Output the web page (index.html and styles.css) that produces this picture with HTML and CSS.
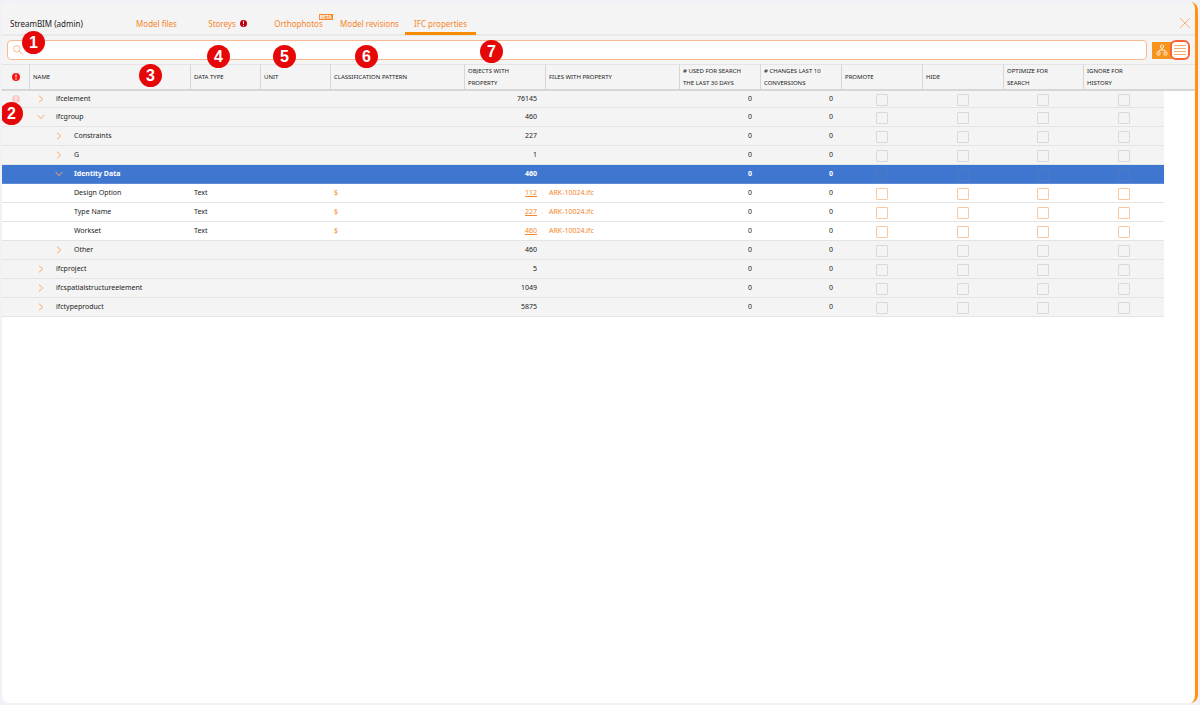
FILE: index.html
```html
<!DOCTYPE html>
<html lang="en">

<head>
    <meta charset="UTF-8">
    <meta name="viewport" content="width=device-width, initial-scale=1.0">
    <title>StreamBIM - IFC properties</title>
    <link rel="stylesheet" href="styles.css">
</head>

<body>

    <svg class="sprite" aria-hidden="true">
        <symbol id="alert" viewBox="0 0 8 8">
            <circle cx="4" cy="4" r="4" fill="currentColor" />
            <path d="M4 1.3v3.2M4 5.6v1.1" stroke="#fff" stroke-width="1.1" />
        </symbol>
        <symbol id="chevron" viewBox="0 0 8 8">
            <path d="M2 0.7L5.7 4L2 7.3" fill="none" stroke="currentColor" />
        </symbol>
    </svg>

    <div class="panel">
        <header class="topbar">
            <h1>StreamBIM (admin)</h1>
            <nav class="tabs">
                <a href="#">Model files</a>
                <a href="#">Storeys <svg class="alert dark"><use href="#alert" /></svg></a>
                <a href="#"><span class="with-beta">Orthophotos<sup class="beta">BETA</sup></span></a>
                <a href="#">Model revisions</a>
                <a href="#" class="active">IFC properties</a>
            </nav>
            <button class="close" aria-label="Close">
                <svg viewBox="0 0 12 12"><path d="M1 1L11 11M11 1L1 11" /></svg>
            </button>
        </header>

        <div class="toolbar">
            <label class="search">
                <svg viewBox="0 0 10 10"><circle cx="3.8" cy="3.8" r="3.2" /><path d="M6.1 6.1L9.7 9.7" /></svg>
                <input type="text" aria-label="Search properties">
            </label>
            <div class="view-toggle">
                <button class="tree" aria-label="Tree view">
                    <svg viewBox="0 0 12 12">
                        <rect x="4.5" y="1" width="3" height="3" rx="1" />
                        <rect x="1" y="8" width="3" height="3" rx="1" />
                        <rect x="8" y="8" width="3" height="3" rx="1" />
                        <path d="M6 4v2M2.5 8L3.5 6h5L9.5 8" />
                    </svg>
                </button>
                <button class="list" aria-label="List view">
                    <svg viewBox="0 0 12 12"><path d="M0 1.5h12M0 4.5h12M0 7.5h12M0 10.5h12" /></svg>
                </button>
            </div>
        </div>

        <table class="props">
            <colgroup>
                <col class="c-icon">
                <col class="c-name">
                <col class="c-small">
                <col class="c-small">
                <col class="c-wide">
                <col class="c-mid">
                <col class="c-wide">
                <col class="c-mid">
                <col class="c-mid">
                <col class="c-mid">
                <col class="c-mid">
                <col class="c-end">
                <col class="c-mid">
                <col>
            </colgroup>
            <thead>
                <tr>
                    <th class="icon"><svg class="alert"><use href="#alert" /></svg></th>
                    <th>NAME</th>
                    <th>DATA TYPE</th>
                    <th>UNIT</th>
                    <th>CLASSIFICATION PATTERN</th>
                    <th>OBJECTS WITH<br>PROPERTY</th>
                    <th>FILES WITH PROPERTY</th>
                    <th># USED FOR SEARCH<br>THE LAST 30 DAYS</th>
                    <th># CHANGES LAST 10<br>CONVERSIONS</th>
                    <th>PROMOTE</th>
                    <th>HIDE</th>
                    <th>OPTIMIZE FOR<br>SEARCH</th>
                    <th>IGNORE FOR<br>HISTORY</th>
                    <td></td>
                </tr>
            </thead>
            <tbody id="rows"></tbody>
        </table>

        <span class="marker m1">1</span>
        <span class="marker m2">2</span>
        <span class="marker m3">3</span>
        <span class="marker m4">4</span>
        <span class="marker m5">5</span>
        <span class="marker m6">6</span>
        <span class="marker m7">7</span>
    </div>

    <script src="script.js"></script>
</body>

</html>
```
FILE: styles.css
```css
* {
    box-sizing: border-box;
}

body {
    margin: 0;
    padding: 2px;
    min-height: 100vh;
    display: flex;
    background-color: #f2f1f7;
    color: #222;
    font-family: "Noto Sans", sans-serif;
    font-size: 7px;
}

button {
    padding: 0;
    border: none;
    background: none;
    cursor: pointer;
}

a {
    color: #f5862a;
}

svg {
    display: block;
    fill: none;
}

.sprite {
    position: absolute;
    width: 0;
    height: 0;
}

.panel {
    position: relative;
    flex: 1;
    min-width: 0;
    background-color: #fff;
    border-right: 3px solid #ff9210;
    border-radius: 8px;
    overflow: hidden;
}

/* top bar */
.topbar {
    display: flex;
    height: 34px;
    padding-left: 8px;
    background-color: #f4f4f4;
    border-bottom: 2px solid #e9e9e9;
}

.topbar h1 {
    width: 111px;
    margin: 0;
    padding-top: 9px;
    font-size: 8px;
    font-weight: normal;
    line-height: 26px;
}

.tabs {
    display: flex;
    height: 33px;
    font-size: 8px;
}

.tabs a {
    display: flex;
    align-items: center;
    justify-content: center;
    gap: 4px;
    width: 71px;
    padding-top: 12px;
    border-bottom: 3px solid transparent;
    text-decoration: none;
    white-space: nowrap;
}

.tabs .active {
    border-color: #f78c00;
}

.alert {
    width: 8px;
    height: 8px;
    color: #fa1414;
}

.alert.dark {
    width: 7px;
    height: 7px;
    color: #b8000c;
}

.alert.faded {
    color: #fbc9c9;
}

.with-beta {
    position: relative;
}

.beta {
    position: absolute;
    right: -10px;
    top: -4px;
    padding: 0 1px;
    background-color: #f5872a;
    color: #fff;
    font-size: 5px;
    font-weight: bold;
    line-height: 6px;
}

.close {
    margin-left: auto;
    padding: 10px 4px 0 0;
}

.close svg {
    width: 12px;
    height: 12px;
    stroke: #f9b27c;
}

/* search and view buttons */
.toolbar {
    display: flex;
    align-items: center;
    gap: 5px;
    height: 28px;
    padding: 0 5px;
    background-color: #f4f4f4;
}

.search {
    display: flex;
    flex: 1;
    align-items: center;
    gap: 4px;
    height: 20px;
    padding: 0 5px;
    background-color: #fff;
    border: 1px solid #f8b892;
    border-radius: 4px;
}

.search svg {
    width: 10px;
    height: 10px;
    stroke: #f9b98a;
}

.search input {
    flex: 1;
    border: none;
    outline: none;
    font-size: 9px;
}

.view-toggle {
    display: flex;
    align-items: center;
}

.view-toggle button {
    display: flex;
    align-items: center;
    justify-content: center;
}

.view-toggle svg {
    width: 12px;
    height: 12px;
    stroke: #f9ae70;
}

.view-toggle .tree {
    width: 20px;
    height: 17px;
    margin-right: -2px;
    background-color: #f7941d;
}

.view-toggle .tree svg {
    stroke: #fff0dc;
}

.view-toggle .list {
    width: 20px;
    height: 20px;
    background-color: #fff;
    border: 2px solid #fa6438;
    border-radius: 6px;
}

/* property table */
.props {
    width: 100%;
    table-layout: fixed;
    border-collapse: separate;
    border-spacing: 0;
}

.c-icon { width: 27px; }
.c-name { width: 161px; }
.c-small { width: 70px; }
.c-wide { width: 134px; }
.c-mid { width: 81px; }
.c-end { width: 80px; }

.props th,
.props td {
    padding: 0 4px;
    text-align: left;
    white-space: nowrap;
}

.props thead th,
.props thead td {
    height: 27px;
    padding: 0 3px;
    background-color: #f4f4f4;
    border-top: 1px solid #e4e4e4;
    border-bottom: 2px solid #d6d6d6;
    font-size: 6px;
    font-weight: normal;
    line-height: 12px;
}

.props thead th + th {
    border-left: 1px solid #d6d6d6;
}

.props .icon {
    padding: 0;
}

.props .icon svg {
    margin: 0 auto;
}

.props tbody td {
    height: 19px;
    line-height: 16px;
    border-bottom: 1px solid #e4e4e4;
}

.props tbody tr:first-child td {
    height: 17px;
    line-height: 14px;
}

.props .group td {
    background-color: #f4f4f4;
}

.props .selected td {
    background-color: #3f76cf;
    border-color: #5d8bd6;
    color: #fff;
    font-weight: bold;
}

.props tbody td.rest {
    background-color: #fff;
    border-color: #fff;
}

.props td.num {
    padding-right: 8px;
    text-align: right;
}

.props .files a {
    text-decoration: none;
}

.props .pattern {
    color: #f5862a;
}

.name {
    display: flex;
    align-items: center;
    padding-left: 4px;
}

.name.deep {
    padding-left: 22px;
}

.name button,
.name .space {
    width: 19px;
    color: #f9a765;
}

.name button svg {
    width: 8px;
    height: 8px;
}

.name button.open svg {
    transform: rotate(90deg);
}

.props td.check {
    padding: 0;
}

.check input {
    appearance: none;
    display: block;
    width: 12px;
    height: 12px;
    margin: 1px auto 0;
    border: 1px solid #fac7a0;
    border-radius: 1px;
}

.group .check input {
    border-color: #d9d9d9;
}

.selected .check input {
    border-color: #5079bf;
}

/* numbered markers over the page */
.marker {
    position: absolute;
    width: 23px;
    height: 23px;
    border-radius: 50%;
    background-color: #e60808;
    color: #fff;
    font-family: "Liberation Sans", Arial, sans-serif;
    font-size: 16px;
    font-weight: bold;
    line-height: 23px;
    text-align: center;
}

.m1 { left: 20px; top: 29px; }
.m2 { left: -2px; top: 100px; }
.m3 { left: 137px; top: 62px; }
.m4 { left: 205px; top: 43px; }
.m5 { left: 271px; top: 43px; }
.m6 { left: 353px; top: 43px; }
.m7 { left: 478px; top: 38px; }
```
FILE: script.js
```javascript
const rows = [
    { name: 'ifcelement', level: 1, count: 76145, alert: true },
    { name: 'ifcgroup', level: 1, count: 460, open: true },
    { name: 'Constraints', level: 2, count: 227 },
    { name: 'G', level: 2, count: 1 },
    { name: 'Identity Data', level: 2, count: 460, open: true, selected: true },
    { name: 'Design Option', level: 3, count: 112 },
    { name: 'Type Name', level: 3, count: 227 },
    { name: 'Workset', level: 3, count: 460 },
    { name: 'Other', level: 2, count: 460 },
    { name: 'ifcproject', level: 1, count: 5 },
    { name: 'ifcspatialstructureelement', level: 1, count: 1049 },
    { name: 'ifctypeproduct', level: 1, count: 5875 }
];

const checks = ['Promote', 'Hide', 'Optimize for search', 'Ignore for history'];

function renderRow(row) {
    const leaf = row.level === 3;
    const rowClass = (leaf ? 'leaf' : 'group') + (row.selected ? ' selected' : '');
    const toggle = leaf
        ? '<span class="space"></span>'
        : `<button class="${row.open ? 'open' : ''}" aria-label="Toggle ${row.name}"><svg><use href="#chevron" /></svg></button>`;

    return `<tr class="${rowClass}">
        <td class="icon">${row.alert ? '<svg class="alert faded"><use href="#alert" /></svg>' : ''}</td>
        <td><div class="name ${row.level > 1 ? 'deep' : ''}">${toggle}<span>${row.name}</span></div></td>
        <td>${leaf ? 'Text' : ''}</td>
        <td></td>
        <td class="pattern">${leaf ? '$' : ''}</td>
        <td class="num">${leaf ? `<a href="#">${row.count}</a>` : row.count}</td>
        <td class="files">${leaf ? '<a href="#">ARK-10024.ifc</a>' : ''}</td>
        <td class="num">0</td>
        <td class="num">0</td>
        ${checks.map(c => `<td class="check"><input type="checkbox" aria-label="${c} ${row.name}" ${leaf ? '' : 'disabled'}></td>`).join('')}
        <td class="rest"></td>
    </tr>`;
}

document.getElementById('rows').innerHTML = rows.map(renderRow).join('');
```
